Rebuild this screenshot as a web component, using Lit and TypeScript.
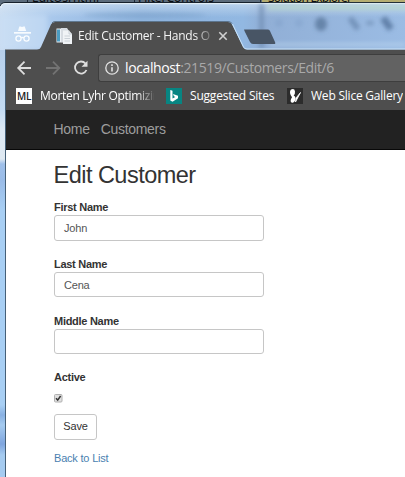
import { LitElement, html, css } from "lit";
import { customElement, property } from "lit/decorators.js";

@customElement("browser-tabs")
class BrowserTabs extends LitElement {
  static styles = css`
    :host { display: block; position: relative; height: 50px; overflow: hidden; }
    .art { position: absolute; inset: 0; }
    .behind { position: absolute; top: -9px; font: 12px/14px "Noto Sans", sans-serif; color: #0b0d10; white-space: nowrap; height: 11px; overflow: hidden; }
    .b1 { left: 32px; } .b2 { left: 138px; } .b3 { left: 268px; letter-spacing: -0.8px; }
    .tab { position: relative; display: flex; align-items: center; height: 20px; padding: 26px 0 0 56px; }
    .title { margin-left: 6px; width: 134px; overflow: hidden; white-space: nowrap; color: #f4f4f4;
      font: 12px/20px "Open Sans", sans-serif; letter-spacing: -0.26px;
      -webkit-mask-image: linear-gradient(90deg, #000 117px, transparent 137px); }
    .close { margin-left: 6px; }
  `;
  render() {
    return html`
      <svg class="art" width="405" height="50" viewBox="0 0 405 50">
        <defs>
          <linearGradient id="glass" x1="0" x2="1" y1="0" y2="0">
            <stop offset="0" stop-color="#c9dcf1" /><stop offset=".13" stop-color="#a9c8ec" />
            <stop offset=".35" stop-color="#8fb4de" /><stop offset=".6" stop-color="#92b8e2" />
            <stop offset=".65" stop-color="#91afd6" /><stop offset="1" stop-color="#9bbce4" />
          </linearGradient>
          <linearGradient id="shade" x1="0" x2="0" y1="0" y2="1">
            <stop offset="0" stop-color="#dce9f5" stop-opacity=".55" /><stop offset=".3" stop-color="#dce9f5" stop-opacity="0" />
          </linearGradient>
          <filter id="soft"><feGaussianBlur stdDeviation="2" /></filter>
        </defs>
        <rect width="265" height="8" fill="#5c6c7c" /><rect x="262" width="143" height="8" fill="#b5ad70" />
        <path d="M27.500 0V3M134.500 0V3M260.500 0V3" stroke="#1d2834" />
        <path d="M0 50V7Q0 3 5 3H405V50Z" fill="url(#glass)" />
        <path d="M0 50V7Q0 3 5 3H405V50Z" fill="url(#shade)" />
        <path d="M0 6Q1 2.5 5 2.5H405" fill="none" stroke="#16212c" />
        <path d="M1 8Q1 3.7 5 3.7H405" fill="none" stroke="#e8f2f8" />
        <g filter="url(#soft)">
          <ellipse cx="145" cy="15" rx="62" ry="2.5" fill="#6f97c2" opacity=".45" />
          <rect x="259" y="4" width="5" height="44" fill="#6885aa" opacity=".6" />
          <rect x="268" y="5" width="140" height="5" fill="#b8d8c8" opacity=".7" />
          <circle cx="279" cy="23" r="4" fill="#7596c0" opacity=".3" />
          <circle cx="299" cy="23" r="4" fill="#7596c0" opacity=".3" />
          <ellipse cx="321" cy="24" rx="6" ry="7" fill="#536f94" opacity=".7" />
          <path d="M350 18l8 11" stroke="#5d7ba2" stroke-width="6" opacity=".6" />
          <ellipse cx="370" cy="23" rx="4" ry="2" fill="#607ea5" opacity=".6" />
          <path d="M383 18l8 11" stroke="#48678f" stroke-width="7" opacity=".7" />
          <rect x="270" y="43" width="135" height="3" fill="#c1dbf2" opacity=".6" />
          <rect x="0" y="15" width="47" height="34" fill="#cce2f8" opacity=".5" />
        </g>
        <path d="M5 50V49.5H37Q40 49.5 41 47L51 24.5Q52 22 55 22H228Q231 22 232 24.5L243 47Q244 49.5 247 49.5H405V50Z" fill="#4e4e4e" />
        <path d="M52 23Q53 21.5 55 21.5H228Q231 21.5 232 23.5" fill="none" stroke="#4f6478" stroke-width=".8" />
        <path d="M244 29.5H268Q269.500 29.5 270 31L275 42Q276 44 274 44H253Q251 44 250 42L244.500 31Z" fill="#485565" />
        <path d="M232.500 24L243.500 47Q244.500 49 247 49H405" fill="none" stroke="#c8e2f8" stroke-width="1" />
        <g fill="#fafdff" opacity=".95">
          <path d="M18 31L19.200 27Q19.500 26.200 20.300 26.400L22 26.900L23.800 26.400Q24.600 26.200 24.900 27L26.200 31Z" />
          <rect x="14" y="32" width="17" height="1.700" />
        </g>
        <g fill="none" stroke="#fafdff" stroke-width="1.300"><circle cx="18.500" cy="38.500" r="2.600" /><circle cx="26.500" cy="38.500" r="2.600" /><path d="M21 38q1.500-1 3 0" /></g>
      </svg>
      <span class="behind b1">EditUsrhtml</span><span class="behind b2">FilterControls</span><span class="behind b3">Solution Explorer</span>
      <div class="tab">
        <svg width="16" height="18" viewBox="0 0 16 18">
          <rect x=".5" y="1.500" width="10" height="14" fill="#edf2f7" /><rect x="1" y="2.500" width="3" height="12" fill="#4b9cc2" />
          <path d="M5 1H11L13 4V15H5Z" fill="#d7dce2" /><path d="M7 3.500H13L16 7V17H7Z" fill="#f0f3f6" />
          <path d="M13 3.500V7H16M8.500 9H14M8.500 11.500H14M8.500 14H14" fill="none" stroke="#c0c8d0" stroke-width=".8" />
        </svg>
        <span class="title">Edit Customer - Hands O</span>
        <svg class="close" width="10" height="10" viewBox="0 0 10 10"><path d="M1.300 1.300L8.700 8.700M8.700 1.300L1.300 8.700" stroke="#d0d0d0" stroke-width="1.600" /></svg>
      </div>`;
  }
}

@customElement("browser-toolbar")
class BrowserToolbar extends LitElement {
  static styles = css`
    :host { display: block; height: 60px; background: #4e4e4e; color: #fff; font-family: "Open Sans", sans-serif; overflow: hidden; }
    .nav { display: flex; height: 28px; padding-top: 4px; align-items: center; }
    .arrows { flex: none; margin-left: 10px; }
    .url { box-sizing: border-box; margin-left: 8px; flex: 1; height: 28px; display: flex; align-items: center; background: #626262;
      border: 1px solid #3e3e3e; border-right: 0; border-radius: 3px 0 0 3px; padding-left: 6px; font-size: 14px; line-height: 24px; white-space: nowrap; }
    .addr { margin-left: 6px; color: #a9a9a9; letter-spacing: -0.39px; }
    .addr b { font-weight: 400; color: #fff; }
    .marks { display: flex; align-items: center; height: 28px; padding-left: 10px; font-size: 12px; line-height: 18px; white-space: nowrap; }
    .marks svg { flex: none; }
    .mark { margin-left: 8px; margin-top: -1px; overflow: hidden; flex: none; }
    .m1 { width: 114px; margin-right: 12px; letter-spacing: -0.3px; -webkit-mask-image: linear-gradient(90deg, #000 96px, transparent 116px); }
    .m2 { width: 85px; margin-right: 12px; letter-spacing: -0.2px; }
    .m3 { letter-spacing: -0.22px; }
    .ml { width: 16px; height: 16px; background: #fff; color: #222; font: 600 10px/17px "Open Sans", sans-serif; text-align: center; letter-spacing: -0.3px; flex: none; }
  `;
  render() {
    return html`
      <div class="nav">
        <svg class="arrows" width="74" height="20" viewBox="0 0 74 20" fill="none" stroke="#dedede" stroke-width="1.800">
          <path d="M15 10H2.500M8.500 3.700L2.200 10L8.500 16.300" />
          <path d="M30 10H43M37 3.700L43.300 10L37 16.300" stroke="#737373" />
          <path d="M69.500 5.500A6 6 0 1 0 70.500 12" /><path d="M71.500 2.800V8.800H65.500Z" fill="#dedede" stroke="none" />
        </svg>
        <div class="url">
          <svg width="14" height="14" viewBox="0 0 14 14"><circle cx="7" cy="7" r="6.200" fill="none" stroke="#e3e3e3" stroke-width="1.300" /><path d="M7 6.200V10.500M7 3.300V4.900" stroke="#e3e3e3" stroke-width="1.600" /></svg>
          <span class="addr"><b>localhost</b>:21519/Customers/Edit/6</span>
        </div>
      </div>
      <div class="marks">
        <span class="ml">ML</span><span class="mark m1">Morten Lyhr Optimizing</span>
        <svg width="16" height="16" viewBox="0 0 16 16"><rect width="16" height="16" fill="#078582" /><path d="M4.300 2L6.500 2.800V10.400L9.300 8.900L7.900 8.200L7 6L12 7.800V10.300L6.500 13.700L4.300 12.400Z" fill="#fff" /></svg>
        <span class="mark m2">Suggested Sites</span>
        <svg width="16" height="16" viewBox="0 0 16 16"><rect width="16" height="16" fill="#2c2c2c" /><path d="M4 1.500Q7.500 0 8 3.500Q8.300 6 6.700 7.600Q9.200 9 8.300 12Q7 15.500 4.500 14.500Q2.500 13 5 9.200Q1.500 4.500 4 1.500Z" fill="#fff" /><path d="M13.500 4.500L8.500 14L9 10Z" fill="#fff" stroke="#fff" stroke-width=".8" /></svg>
        <span class="mark m3">Web Slice Gallery</span>
      </div>`;
  }
}

@customElement("customer-form")
class CustomerForm extends LitElement {
  @property({ attribute: false }) fields = [
    { label: "First Name", value: "John" },
    { label: "Last Name", value: "Cena" },
    { label: "Middle Name", value: "" },
  ];
  static styles = css`
    :host { display: block; flex: 1; background: #fff; color: #333; font: 11px/15px "Liberation Sans", sans-serif; letter-spacing: -0.2px; }
    nav { box-sizing: border-box; display: flex; gap: 11px; height: 40px; padding: 9px 0 0 47.500px; background: #222; border-bottom: 1px solid #080808; color: #9d9d9d; font-size: 14px; line-height: 20px; letter-spacing: -0.3px; }
    main { padding: 11px 0 0 48px; }
    h1 { margin: 0 0 0 -0.500px; font: 400 23.5px/28px "Liberation Sans", sans-serif; letter-spacing: -0.52px; }
    .field { height: 57px; }
    .first { margin-top: 11px; }
    label { display: block; font-weight: 700; height: 15px; letter-spacing: -0.28px; }
    .input { box-sizing: border-box; width: 210px; height: 25px; border: 1px solid #c6c6c6; border-radius: 3px; padding-left: 9px; line-height: 24px; color: #555; }
    .first .input { height: 26px; }
    .active { margin-top: -1px; }
    .check { display: block; margin-top: 9px; }
    .save { box-sizing: border-box; width: 43px; height: 26px; margin-top: 11px; border: 1px solid #c6c6c6; border-radius: 3px; text-align: center; line-height: 23px; }
    .back { display: block; margin-top: 11px; color: #4a7fb0; }
  `;
  render() {
    return html`
      <nav><span>Home</span><span>Customers</span></nav>
      <main>
        <h1>Edit Customer</h1>
        ${this.fields.map((f, i) => html`<div class="field ${i ? "" : "first"}"><label>${f.label}</label><div class="input">${f.value}</div></div>`)}
        <label class="active">Active</label>
        <svg class="check" width="9" height="9" viewBox="0 0 9 9"><rect x=".5" y=".5" width="7.500" height="7.500" rx="1" fill="#e0e0e0" stroke="#b0b0b0" /><path d="M2 4.300L3.700 6.100L6.600 2" fill="none" stroke="#333" stroke-width="1.500" /></svg>
        <div class="save">Save</div>
        <span class="back">Back to List</span>
      </main>`;
  }
}

@customElement("app-root")
class AppRoot extends LitElement {
  static styles = css`
    :host { display: flex; flex-direction: column; width: 405px; height: 477px; overflow: hidden; background: #fff; }
    .body { display: flex; flex: 1; }
    .edge { box-sizing: border-box; width: 6px; flex: none; border-right: 1px solid #456078;
      background: linear-gradient(180deg, #b7d0ec 0, #c4dcf4 60px, #dde9f4 80px, #dfe9f2 109px, #9fc0ea 114px, #9abce8 130px, #a8cff4 160px, #a8cff4 355px, #88b0e2 365px, #a5cbf0 375px, #7fa5de 394px, #a5cbf0 405px); }
    .page { display: flex; flex-direction: column; flex: 1; min-width: 0; }
  `;
  render() {
    return html`<browser-tabs></browser-tabs>
      <div class="body"><div class="edge"></div>
        <div class="page"><browser-toolbar></browser-toolbar><customer-form></customer-form></div>
      </div>`;
  }
}
